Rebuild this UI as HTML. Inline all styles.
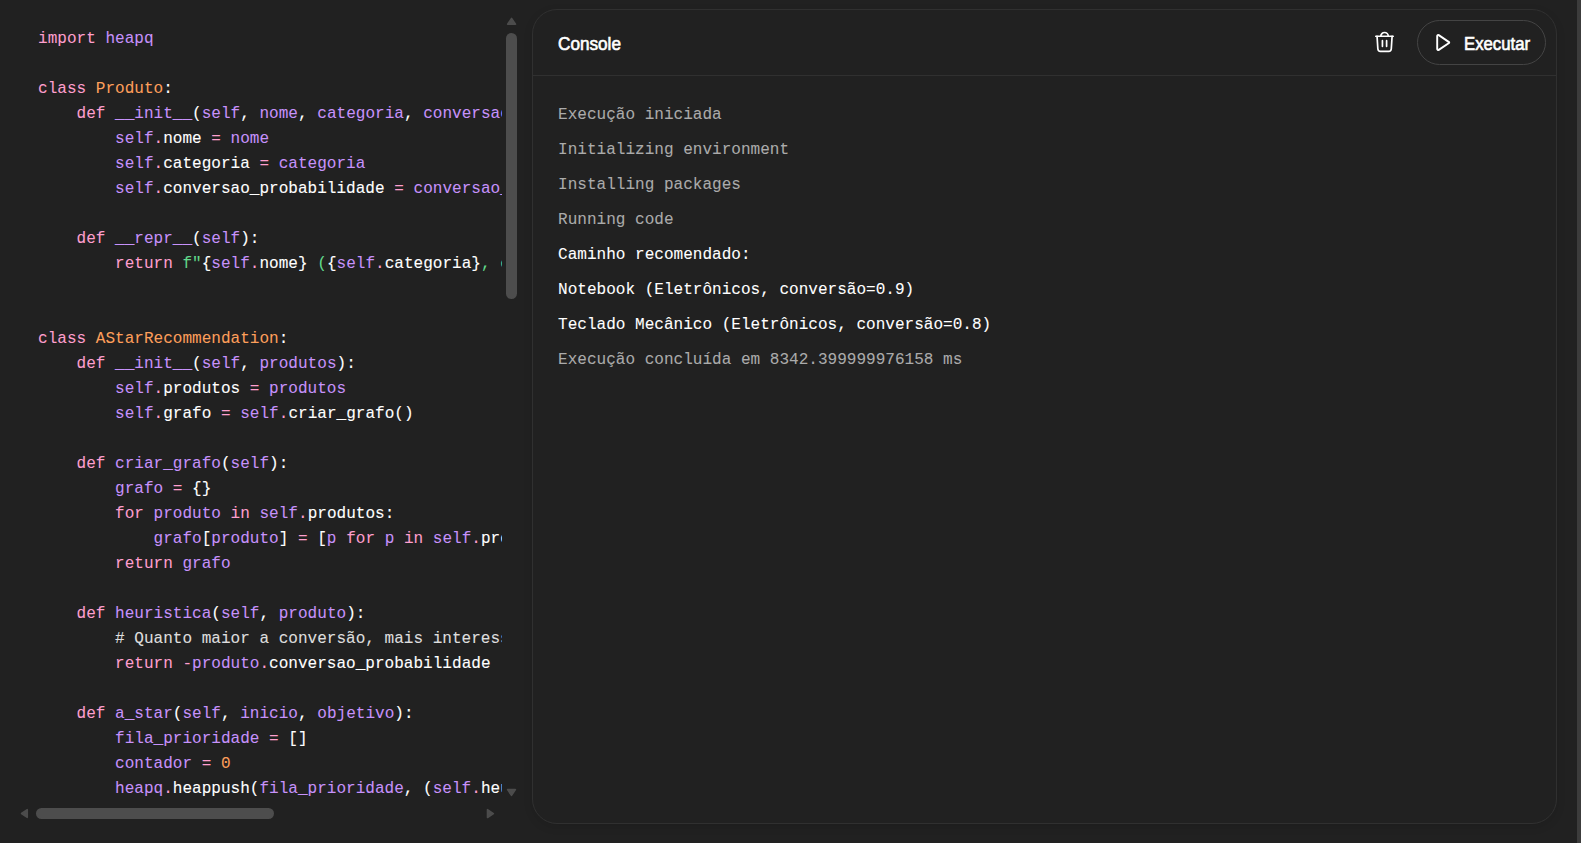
<!DOCTYPE html>
<html lang="pt-BR">
<head>
<meta charset="utf-8">
<title>Console</title>
<style>
*{box-sizing:border-box;margin:0;padding:0}
html,body{width:1581px;height:843px;overflow:hidden;background:#212121}
body{position:relative;font-family:"Liberation Sans",sans-serif;color:#fff}
.strip{position:absolute;left:1577px;top:0;width:4px;height:843px;background:#3c3c3c}
/* ---------- code editor ---------- */
.editor{position:absolute;left:0;top:0;width:502px;height:804px;overflow:hidden}
pre.code{-webkit-text-stroke:.1px;position:absolute;left:37.65px;top:26px;font-family:"Liberation Mono",monospace;font-size:16.4px;line-height:25px;color:#fff;white-space:pre;transform:scaleX(.9787);transform-origin:0 0}
.k,.c,.v,.s,.n{-webkit-text-stroke:.06px}
.k{color:#fe9fce}.c{color:#fd9f5b}.v{color:#c792fb}.s{color:#62d98c}.n{color:#fd9f5b}.m{color:#dedede}
.vthumb{position:absolute;left:506px;top:32.6px;width:11px;height:266.4px;border-radius:6px;background:#4d4d4d}
.hthumb{position:absolute;left:36px;top:808px;width:238px;height:11px;border-radius:6px;background:#4d4d4d}
/* ---------- console panel ---------- */
.panel{position:absolute;left:532px;top:9px;width:1025px;height:815px;border:1px solid #303030;border-radius:25px;box-shadow:0 3px 10px rgba(0,0,0,.1)}
.hdr{position:absolute;left:0;top:0;width:100%;height:66px;border-bottom:1px solid #303030}
.title{position:absolute;left:558px;top:33px;font-weight:400;-webkit-text-stroke:.6px #fff;font-size:17.6px;line-height:22px;transform:scaleX(.975);transform-origin:0 0;white-space:nowrap}
.btn{position:absolute;left:1417px;top:20px;width:129px;height:45px;border:1px solid #444;border-radius:23px}
.run{position:absolute;left:1463.5px;top:33px;font-weight:400;-webkit-text-stroke:.6px #fff;font-size:17.6px;line-height:22px;transform:scaleX(.952);transform-origin:0 0;white-space:nowrap}
svg{position:absolute;overflow:visible}
.log{-webkit-text-stroke:.08px;position:absolute;left:558px;top:96.6px;font-family:"Liberation Mono",monospace;font-size:16.4px;line-height:35px;white-space:pre;color:#fff;transform:scaleX(.9787);transform-origin:0 0}
.log .g{color:#ababab}
</style>
</head>
<body>
<div class="strip"></div>
<div class="editor">
<pre class="code"><span class="k">import</span> <span class="v">heapq</span>

<span class="k">class</span> <span class="c">Produto</span>:
    <span class="k">def</span> <span class="v">__init__</span>(<span class="v">self</span>, <span class="v">nome</span>, <span class="v">categoria</span>, <span class="v">conversao_probabilidade</span>):
        <span class="v">self</span><span class="k">.</span>nome <span class="k">=</span> <span class="v">nome</span>
        <span class="v">self</span><span class="k">.</span>categoria <span class="k">=</span> <span class="v">categoria</span>
        <span class="v">self</span><span class="k">.</span>conversao_probabilidade <span class="k">=</span> <span class="v">conversao_probabilidade</span>

    <span class="k">def</span> <span class="v">__repr__</span>(<span class="v">self</span>):
        <span class="k">return</span> <span class="s">f"</span>{<span class="v">self</span><span class="k">.</span>nome}<span class="s"> (</span>{<span class="v">self</span><span class="k">.</span>categoria}<span class="s">, conversão=</span>{<span class="v">self</span><span class="k">.</span>conversao_probabilidade}<span class="s">)"</span>


<span class="k">class</span> <span class="c">AStarRecommendation</span>:
    <span class="k">def</span> <span class="v">__init__</span>(<span class="v">self</span>, <span class="v">produtos</span>):
        <span class="v">self</span><span class="k">.</span>produtos <span class="k">=</span> <span class="v">produtos</span>
        <span class="v">self</span><span class="k">.</span>grafo <span class="k">=</span> <span class="v">self</span><span class="k">.</span>criar_grafo()

    <span class="k">def</span> <span class="v">criar_grafo</span>(<span class="v">self</span>):
        <span class="v">grafo</span> <span class="k">=</span> {}
        <span class="k">for</span> <span class="v">produto</span> <span class="k">in</span> <span class="v">self</span><span class="k">.</span>produtos:
            <span class="v">grafo</span>[<span class="v">produto</span>] <span class="k">=</span> [<span class="v">p</span> <span class="k">for</span> <span class="v">p</span> <span class="k">in</span> <span class="v">self</span><span class="k">.</span>produtos <span class="k">if</span> <span class="v">p</span> <span class="k">!=</span> <span class="v">produto</span>]
        <span class="k">return</span> <span class="v">grafo</span>

    <span class="k">def</span> <span class="v">heuristica</span>(<span class="v">self</span>, <span class="v">produto</span>):
        <span class="m"># Quanto maior a conversão, mais interessante é o produto</span>
        <span class="k">return</span> <span class="k">-</span><span class="v">produto</span><span class="k">.</span>conversao_probabilidade

    <span class="k">def</span> <span class="v">a_star</span>(<span class="v">self</span>, <span class="v">inicio</span>, <span class="v">objetivo</span>):
        <span class="v">fila_prioridade</span> <span class="k">=</span> []
        <span class="v">contador</span> <span class="k">=</span> <span class="n">0</span>
        <span class="v">heapq</span><span class="k">.</span>heappush(<span class="v">fila_prioridade</span>, (<span class="v">self</span><span class="k">.</span>heuristica(<span class="v">inicio</span>), <span class="v">contador</span>, <span class="v">inicio</span>, [<span class="v">inicio</span>]))</pre>
</div>
<div class="vthumb"></div><div class="hthumb"></div>
<svg style="left:0;top:0" width="530" height="843" viewBox="0 0 530 843" fill="#4c4c4c" stroke="#4c4c4c" stroke-width="1.6" stroke-linejoin="round">
<path d="M511.58 18.45L515.5 24.15H507.65Z"/>
<path d="M511.5 795.4L515.4 789.6H507.6Z"/>
<path d="M21.56 813.5L27.26 809.65V817.35Z"/>
<path d="M493.4 813.6L487.5 809.7V817.5Z"/>
</svg>

<div class="panel"><div class="hdr"></div></div>
<div class="title">Console</div>
<svg style="left:1368px;top:26px" width="36" height="32" viewBox="0 0 36 32" fill="none" stroke="#fff" stroke-width="1.7" stroke-linecap="round" stroke-linejoin="round">
<path d="M7.85 10.25H25.15"/>
<path d="M12.8 10.25A3.73 3.73 0 0 1 20.26 10.25"/>
<path d="M9.05 10.25L9.85 22.8Q10.05 25.45 12.4 25.45H20.75Q23.1 25.45 23.3 22.8L24.1 10.25"/>
<path d="M14.43 14.7V20.3M18.6 14.7V20.3"/>
</svg>
<div class="btn"></div>
<svg style="left:1426px;top:26px" width="36" height="32" viewBox="0 0 36 32" fill="none" stroke="#fff" stroke-width="1.9" stroke-linejoin="round">
<path d="M11.2 9.96A1 1 0 0 1 12.76 9.13L23.01 16.11A.5 .5 0 0 1 23.01 16.93L12.76 23.91A1 1 0 0 1 11.2 23.08Z"/>
</svg>
<div class="run">Executar</div>
<div class="log"><span class="g">Execução iniciada</span>
<span class="g">Initializing environment</span>
<span class="g">Installing packages</span>
<span class="g">Running code</span>
Caminho recomendado:
Notebook (Eletrônicos, conversão=0.9)
Teclado Mecânico (Eletrônicos, conversão=0.8)
<span class="g">Execução concluída em 8342.399999976158 ms</span></div>
</body>
</html>
